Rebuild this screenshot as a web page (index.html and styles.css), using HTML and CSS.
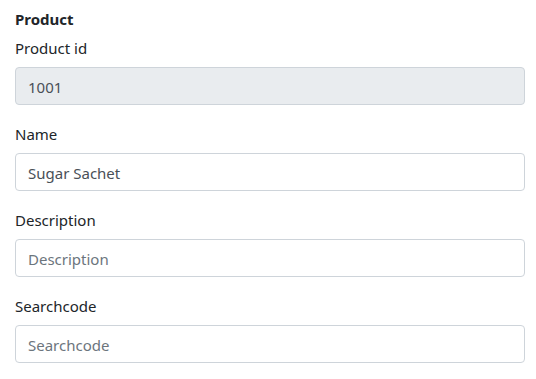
FILE: index.html
```html
<!DOCTYPE html>
<html lang="en">
<head>
    <meta charset="UTF-8">
    <meta name="viewport" content="width=device-width, initial-scale=1.0">
    <title>Product</title>
    <link rel="stylesheet" href="styles.css">
</head>
<body>
    <div class="container">
        <form class="product-form">
            <div class="form-title">Product</div>

            <div class="form-group">
                <label for="productId">Product id</label>
                <input class="form-control" type="text" id="productId" value="1001" disabled>
            </div>

            <div class="form-group">
                <label for="name">Name</label>
                <input class="form-control" type="text" id="name" value="Sugar Sachet">
            </div>

            <div class="form-group">
                <label for="description">Description</label>
                <input class="form-control" type="text" id="description" placeholder="Description">
            </div>

            <div class="form-group">
                <label for="searchcode">Searchcode</label>
                <input class="form-control" type="text" id="searchcode" placeholder="Searchcode">
            </div>
        </form>
    </div>
</body>
</html>
```

FILE: styles.css
```css
* {
    box-sizing: border-box;
}

body {
    margin: 0;
    font-family: "Noto Sans", "Open Sans", Arial, sans-serif;
    font-size: 15px;
    line-height: 24px;
    color: #212529;
    background: #fff;
}

.container {
    padding: 6px 11px 0 15px;
}

.form-title {
    font-weight: bold;
    padding-top: 1px;
    margin-bottom: 4px;
}

.form-group {
    margin-bottom: 16px;
}

label {
    display: block;
    padding-top: 1px;
    margin-bottom: 7px;
}

.form-control {
    display: block;
    width: 100%;
    height: 38px;
    padding: 7px 12px 5px;
    font-family: inherit;
    font-size: 15px;
    line-height: 24px;
    color: #495057;
    background: #fff;
    border: 1px solid #ced4da;
    border-radius: 4px;
}

.form-control::placeholder {
    color: #6c757d;
    opacity: 1;
}

.form-control:disabled {
    background-color: #e9ecef;
    opacity: 1;
}
```
